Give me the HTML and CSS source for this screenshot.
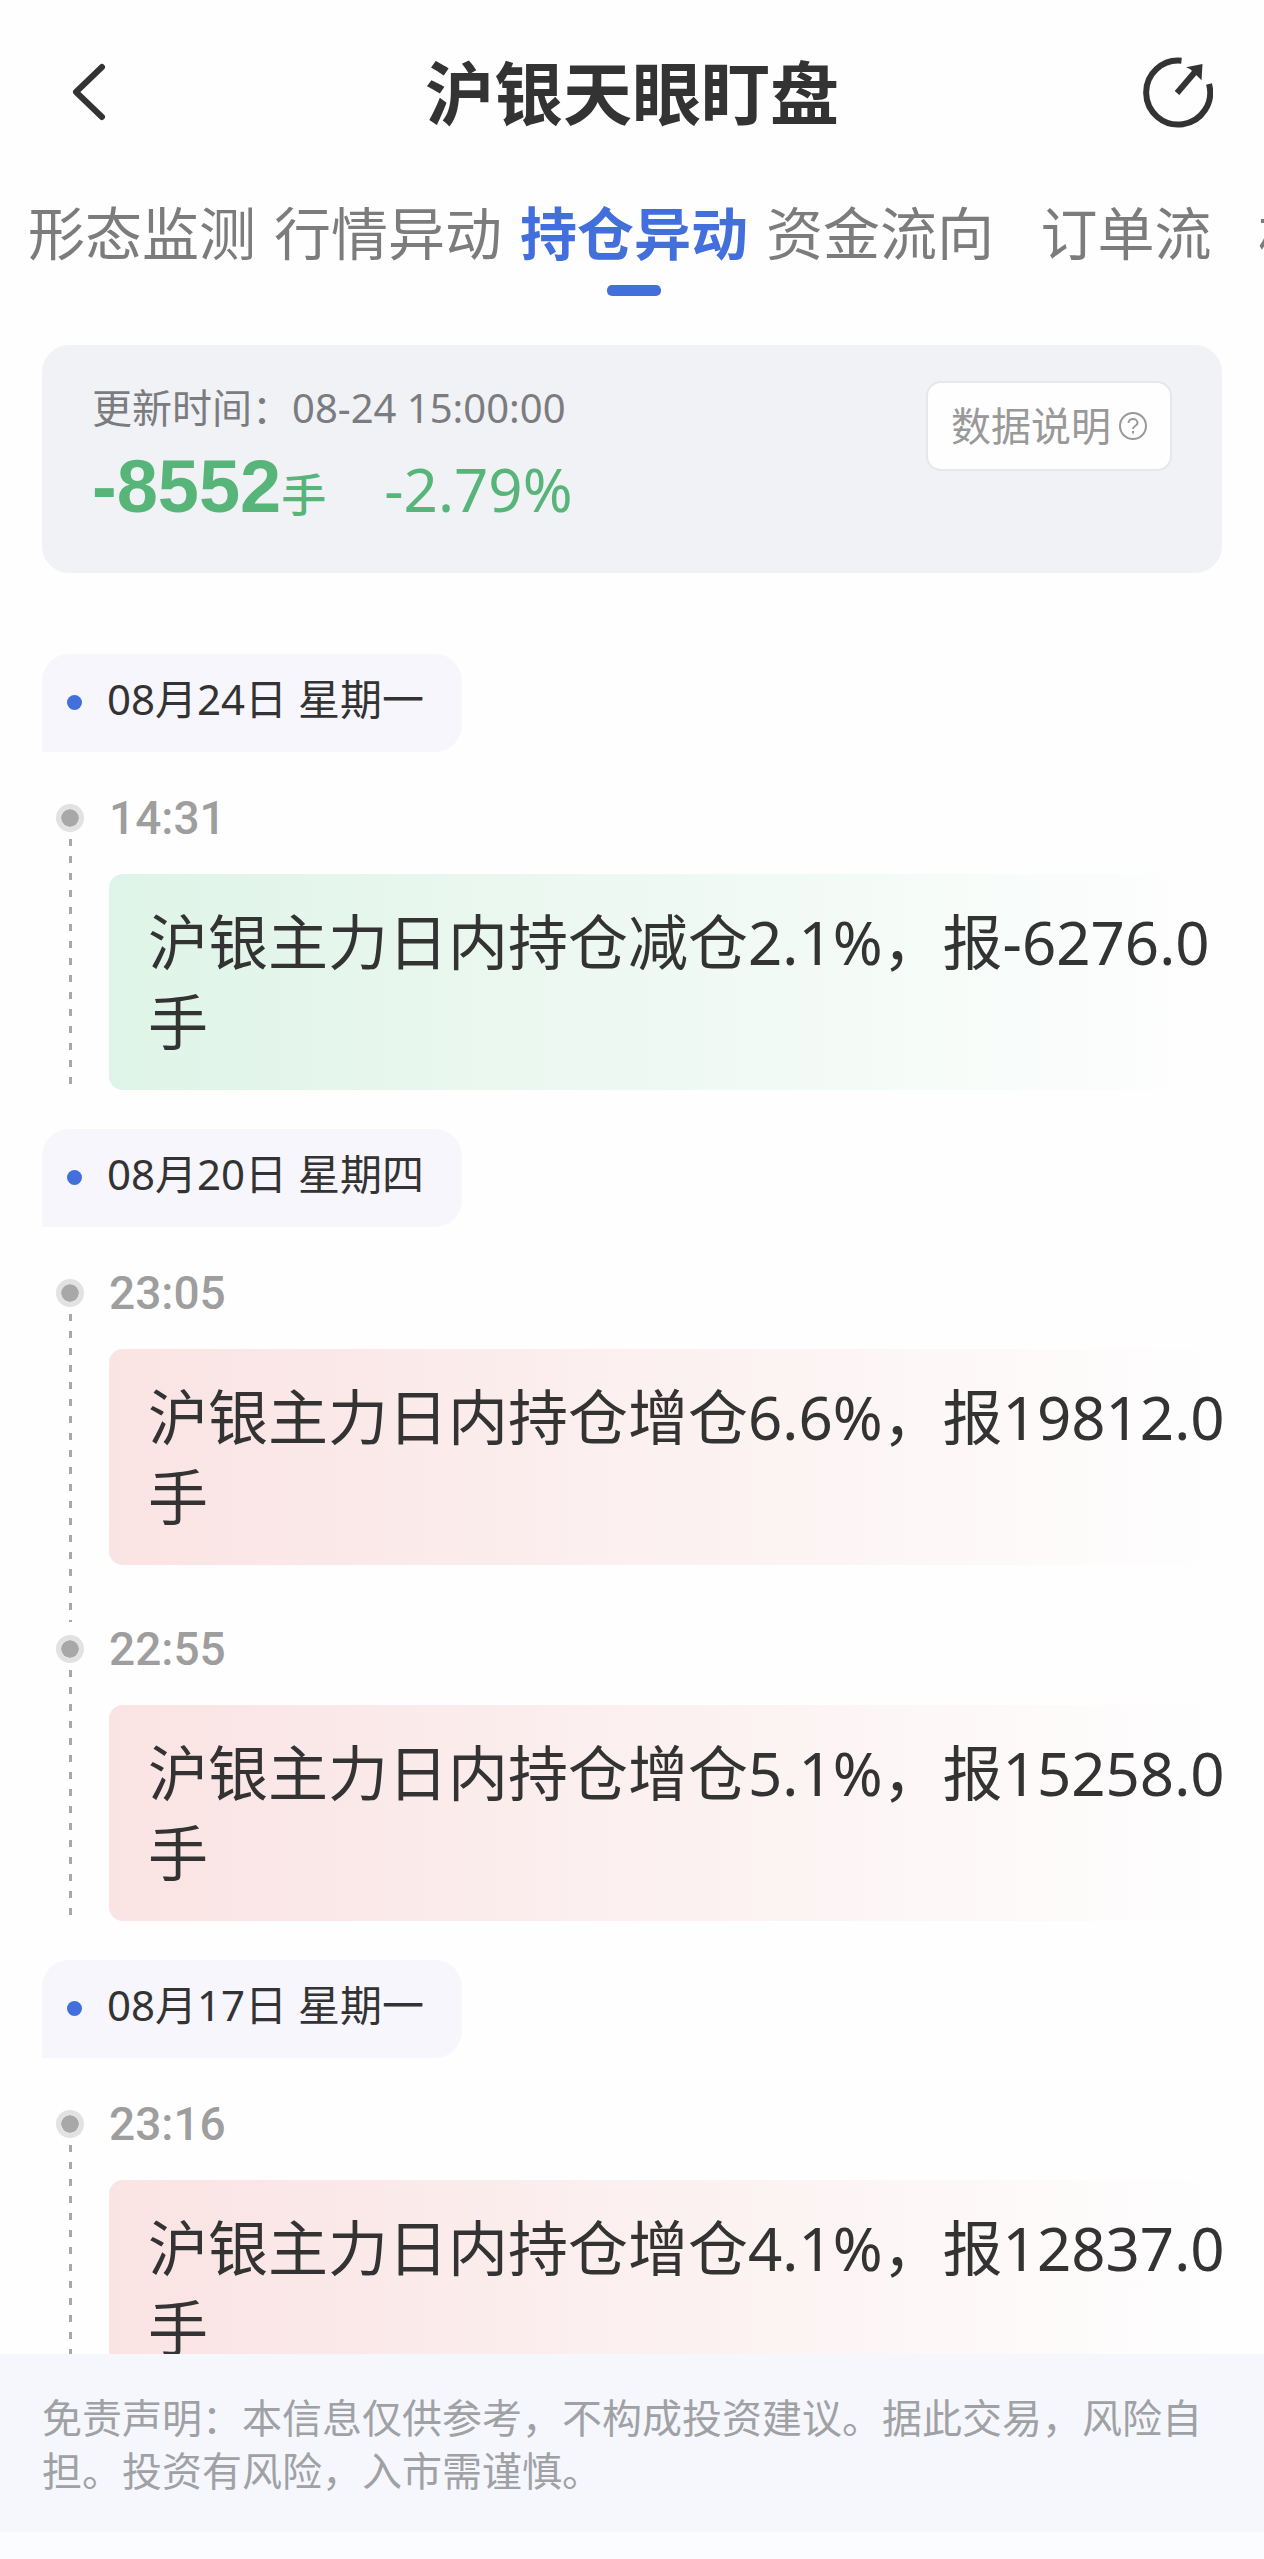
FILE: index.html
```html
<!DOCTYPE html>
<html lang="zh-CN">
<head>
    <meta charset="UTF-8">
    <meta name="viewport" content="width=device-width, initial-scale=1.0">
    <title>沪银天眼盯盘</title>
    <link rel="stylesheet" href="styles.css">
</head>
<body>
    <header class="header">
        <button class="icon-btn" aria-label="返回">
            <svg width="72" height="72" viewBox="0 0 72 72" fill="none" stroke="#333" stroke-width="6" stroke-linecap="round" stroke-linejoin="round">
                <path d="M51 10 L25 35 L51 60"/>
            </svg>
        </button>
        <h1 class="title">沪银天眼盯盘</h1>
        <button class="icon-btn" aria-label="分享">
            <svg width="72" height="72" viewBox="0 0 72 72">
                <path d="M40.5 3.7 A32 32 0 1 0 68 27" fill="none" stroke="#333" stroke-width="6"/>
                <path d="M36 36 L54 15" stroke="#333" stroke-width="6"/>
                <path d="M61.500 7 L45 10.300 L49 12 L58 20.700 L60.500 23.300 Z" fill="#333"/>
            </svg>
        </button>
    </header>

    <nav class="tabs">
        <a class="tab" href="#">形态监测</a>
        <a class="tab" href="#">行情异动</a>
        <a class="tab active" href="#">持仓异动</a>
        <a class="tab" href="#">资金流向</a>
        <a class="tab" href="#">订单流</a>
        <a class="tab" href="#">机构持仓</a>
    </nav>

    <main class="content">
        <section class="summary">
            <div>
                <div class="update">更新时间：08-24 15:00:00</div>
                <div class="figures">
                    <span class="amount">-8552</span>
                    <span class="unit">手</span>
                    <span class="percent">-2.79%</span>
                </div>
            </div>
            <button class="explain">
                数据说明
                <svg width="28" height="28" viewBox="0 0 28 28" fill="none" stroke="#999" stroke-width="2">
                    <circle cx="14" cy="14" r="13"/>
                    <path d="M9.500 11 C9.500 5.500 18.500 5.500 18.500 11 C18.500 14 14 13.500 14 17"/>
                    <path d="M14 19 V21.500"/>
                </svg>
            </button>
        </section>

        <section class="group">
            <h2 class="date">08月24日 星期一</h2>
            <ul class="events">
                <li class="event">
                    <time class="time">14:31</time>
                    <p class="message down">沪银主力日内持仓减仓2.1%，报-6276.0手</p>
                </li>
            </ul>
        </section>

        <section class="group">
            <h2 class="date">08月20日 星期四</h2>
            <ul class="events">
                <li class="event">
                    <time class="time">23:05</time>
                    <p class="message up">沪银主力日内持仓增仓6.6%，报19812.0手</p>
                </li>
                <li class="event">
                    <time class="time">22:55</time>
                    <p class="message up">沪银主力日内持仓增仓5.1%，报15258.0手</p>
                </li>
            </ul>
        </section>

        <section class="group">
            <h2 class="date">08月17日 星期一</h2>
            <ul class="events">
                <li class="event">
                    <time class="time">23:16</time>
                    <p class="message up">沪银主力日内持仓增仓4.1%，报12837.0手</p>
                </li>
            </ul>
        </section>
    </main>

    <footer class="footer">
        <p class="disclaimer">免责声明：本信息仅供参考，不构成投资建议。据此交易，风险自担。投资有风险，入市需谨慎。</p>
    </footer>
</body>
</html>
```

FILE: styles.css
```css
*, *::before, *::after {
    box-sizing: border-box;
}
body {
    margin: 0;
    height: 100vh;
    display: flex;
    flex-direction: column;
    font-family: "Noto Sans", "Noto Sans CJK SC", sans-serif;
    color: #333;
    background: #fefefe;
}
h1, h2, p, ul {
    margin: 0;
    padding: 0;
    font-weight: normal;
}
button {
    font-family: inherit;
    cursor: pointer;
}

/* header */
.header {
    display: flex;
    justify-content: space-between;
    align-items: center;
    padding: 43px 51px 0;
}
.icon-btn {
    display: flex;
    padding: 0;
    border: none;
    background: none;
}
.title {
    font-size: 69px;
    line-height: 100px;
    font-weight: bold;
}

/* tabs */
.tabs {
    display: flex;
    flex: none;
    padding: 50px 19px 0;
    overflow: hidden;
}
.tab {
    flex: none;
    width: 246px;
    display: flex;
    flex-direction: column;
    align-items: center;
    font-size: 57px;
    line-height: 80px;
    color: #7c7c7c;
    text-decoration: none;
    white-space: nowrap;
}
.tab::after {
    content: "";
    width: 54px;
    height: 11px;
    margin-top: 12px;
    border-radius: 5px;
}
.tab.active {
    font-weight: bold;
    color: #426fdb;
}
.tab.active::after {
    background: #426fdb;
}

.content {
    flex: 1;
    min-height: 0;
    padding-top: 49px;
    overflow-y: auto;
    scrollbar-width: none;
}

/* summary card */
.summary {
    display: flex;
    justify-content: space-between;
    align-items: flex-start;
    height: 228px;
    margin: 0 42px 81px;
    padding: 36px 50px;
    border-radius: 27px;
    background: #f1f2f6;
}
.update {
    font-size: 40px;
    line-height: 54px;
    color: #7b7c80;
}
.figures {
    display: flex;
    align-items: baseline;
    line-height: 104px;
    color: #58b579;
}
.amount {
    font-family: "Liberation Sans", Arial, sans-serif;
    font-size: 74px;
    font-weight: bold;
}
.unit {
    font-size: 45px;
    font-weight: 500;
}
.percent {
    margin-left: 58px;
    font-size: 60px;
}
.explain {
    display: flex;
    align-items: center;
    gap: 8px;
    height: 90px;
    padding: 0 23px;
    border: 2px solid #e6e7ea;
    border-radius: 15px;
    background: #fefefe;
    font-size: 40px;
    line-height: 54px;
    color: #999;
}

/* timeline */
.group {
    padding: 0 0 39px 42px;
}
.date {
    display: flex;
    align-items: flex-start;
    gap: 25px;
    width: fit-content;
    height: 98px;
    padding: 20px 38px 0 25px;
    border-radius: 27px 27px 27px 0;
    background: #f6f6fc;
    font-size: 42px;
    line-height: 50px;
}
.date::before {
    content: "";
    width: 15px;
    height: 15px;
    margin-top: 21px;
    border-radius: 50%;
    background: #426fdb;
}
.events {
    margin-top: 39px;
    list-style: none;
}
.event {
    position: relative;
    padding: 0 0 57px 67px;
}
.event:last-child {
    padding-bottom: 0;
}
/* dot on the line */
.event::before {
    content: "";
    position: absolute;
    left: 14px;
    top: 13px;
    width: 28px;
    height: 28px;
    border: 5px solid #e2e2e2;
    border-radius: 50%;
    background: #a8a8a8;
    background-clip: padding-box;
}
/* dashed line down to the next dot */
.event::after {
    content: "";
    position: absolute;
    left: 27px;
    top: 48px;
    bottom: 0;
    width: 3px;
    background: repeating-linear-gradient(#a8a8a8 0 7px, transparent 7px 17px);
}
.time {
    display: block;
    margin-bottom: 29px;
    font-family: Roboto, sans-serif;
    font-size: 46px;
    line-height: 54px;
    font-weight: 500;
    color: #9e9e9e;
}
.message {
    padding: 28px 24px 28px 39px;
    border-radius: 14px;
    font-size: 60px;
    line-height: 80px;
}
.message.down {
    background: linear-gradient(to right, #dff4e8, #fefefe 96%);
}
.message.up {
    background: linear-gradient(to right, #fae3e3, #fefefe 96%);
}

/* disclaimer */
.footer {
    padding-bottom: 27px;
    background: #fbfcff;
}
.disclaimer {
    padding: 37px 42px 35px;
    background: #f5f7fc;
    font-size: 40px;
    line-height: 53px;
    color: #a0a1a5;
}
```
